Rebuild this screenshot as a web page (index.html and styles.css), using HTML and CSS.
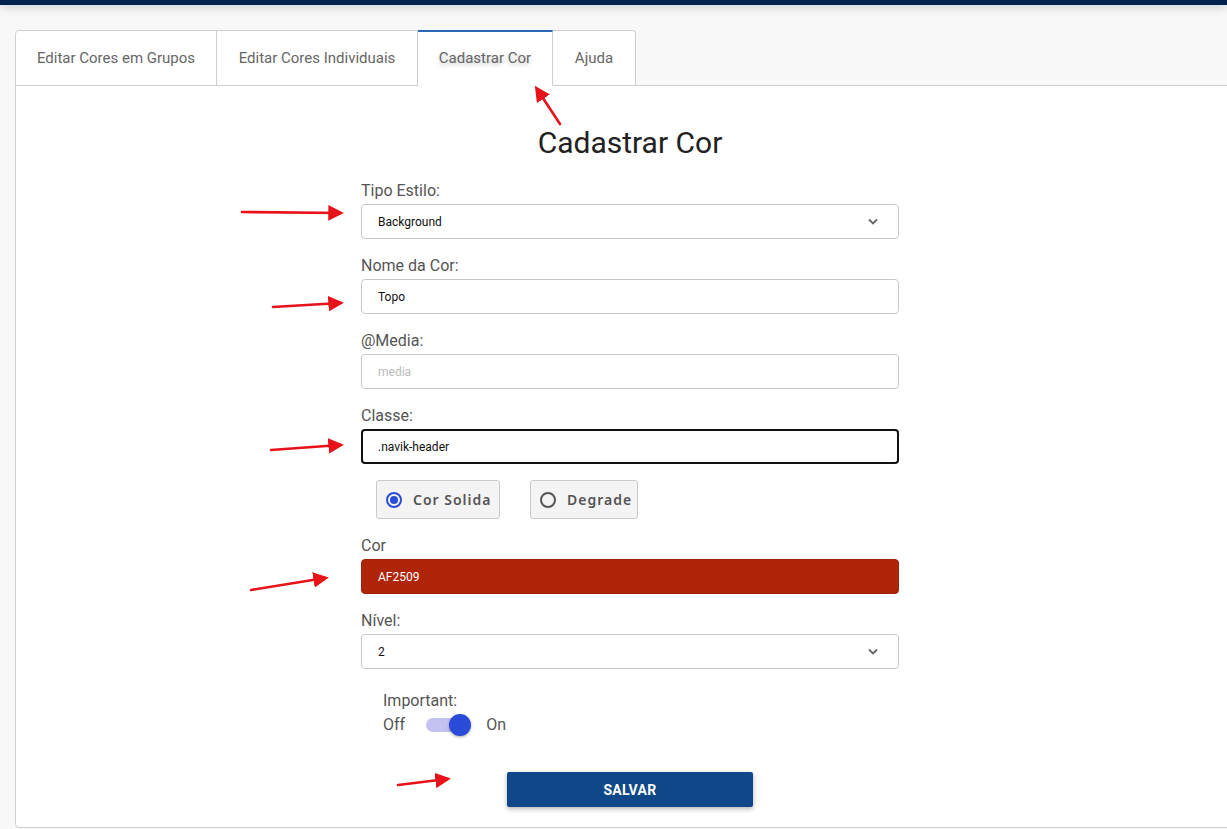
FILE: index.html
```html
<!DOCTYPE html>
<html lang="pt-BR">
<head>
  <meta http-equiv="Content-Type" content="text/html;charset=UTF-8">
  <meta name="viewport" content="width=device-width, initial-scale=1.0">
  <link rel="stylesheet" href="styles.css">
</head>
<body>
  <div class="topbar"></div>

  <div class="page">
    <div class="tabs">
      <div class="tab first">Editar Cores em Grupos</div>
      <div class="tab">Editar Cores Individuais</div>
      <div class="tab active">Cadastrar Cor</div>
      <div class="tab last">Ajuda</div>
      <div class="tab-fill"></div>
    </div>

    <div class="panel">
      <h1 class="form-title">Cadastrar Cor</h1>

      <form class="color-form">
        <div class="field">
          <label class="field-label">Tipo Estilo:</label>
          <div class="input select">
            <span>Background</span>
            <svg class="chevron" width="10" height="7" viewBox="0 0 10 7"><path d="M1 1.5 L5 5.5 L9 1.5" fill="none" stroke="#666" stroke-width="1.8"/></svg>
          </div>
        </div>

        <div class="field">
          <label class="field-label">Nome da Cor:</label>
          <div class="input">Topo</div>
        </div>

        <div class="field">
          <label class="field-label">@Media:</label>
          <div class="input placeholder">media</div>
        </div>

        <div class="field">
          <label class="field-label">Classe:</label>
          <div class="input focused">.navik-header</div>
        </div>

        <div class="radio-row">
          <div class="radio-box">
            <span class="radio checked"></span>
            <span class="radio-text">Cor Solida</span>
          </div>
          <div class="radio-box">
            <span class="radio"></span>
            <span class="radio-text">Degrade</span>
          </div>
        </div>

        <div class="field">
          <label class="field-label">Cor</label>
          <div class="input color-swatch">AF2509</div>
        </div>

        <div class="field">
          <label class="field-label">Nível:</label>
          <div class="input select">
            <span>2</span>
            <svg class="chevron" width="10" height="7" viewBox="0 0 10 7"><path d="M1 1.5 L5 5.5 L9 1.5" fill="none" stroke="#666" stroke-width="1.8"/></svg>
          </div>
        </div>

        <div class="important">
          <div class="field-label">Important:</div>
          <div class="toggle-row">
            <span>Off</span>
            <span class="switch"><span class="thumb"></span></span>
            <span>On</span>
          </div>
        </div>

        <div class="actions">
          <button type="button" class="save-btn">SALVAR</button>
        </div>
      </form>
    </div>
  </div>

  <svg class="annotations" width="1227" height="829" viewBox="0 0 1227 829">
    <defs>
      <marker id="head" markerWidth="6" markerHeight="6" refX="4.5" refY="3" orient="auto" markerUnits="strokeWidth">
        <path d="M0 0 L6 3 L0 6 Z" fill="#e8121a"/>
      </marker>
    </defs>
    <g stroke="#e8121a" stroke-width="2.6" stroke-linecap="round" fill="none" marker-end="url(#head)">
      <line x1="560" y1="124" x2="537" y2="89"/>
      <line x1="242" y1="212" x2="340" y2="213"/>
      <line x1="273" y1="307" x2="340" y2="303"/>
      <line x1="271" y1="450" x2="340" y2="445"/>
      <line x1="251" y1="590" x2="325" y2="578"/>
      <line x1="398" y1="785" x2="447" y2="779"/>
    </g>
  </svg>
</body>
</html>
```

FILE: styles.css
```css
* {
  margin: 0;
  padding: 0;
  box-sizing: border-box;
  font-family: Roboto, 'Liberation Sans', sans-serif;
}

html, body {
  width: 1227px;
  height: 829px;
  overflow: hidden;
  background: #f8f8f8;
}

body {
  position: relative;
}

.topbar {
  height: 5px;
  background: #01224d;
  box-shadow: 0 2px 8px rgba(1, 34, 77, 0.25);
}

.page {
  padding: 25px 0 0 15px;
  margin-right: -18px;
}

.tabs {
  display: flex;
  height: 55px;
}

.tab {
  display: flex;
  align-items: center;
  justify-content: center;
  white-space: nowrap;
  flex-shrink: 0;
  font-size: 15px;
  color: #666;
  background: #fff;
  border: 1px solid #cfcfcf;
  border-left: none;
  margin-bottom: -1px;
  position: relative;
  z-index: 1;
}

.tab.first {
  border-left: 1px solid #cfcfcf;
  border-top-left-radius: 4px;
  width: 202px;
}

.tab:nth-child(2) {
  width: 201px;
}

.tab.active {
  width: 135px;
  padding-bottom: 2px;
  border-top: 2px solid #2b67b3;
  border-bottom-color: #fff;
  text-shadow: 0 2px 4px rgba(0, 0, 0, 0.25);
}

.tab.last {
  width: 83px;
  border-top-right-radius: 4px;
}

.tab-fill {
  flex: 1;
}

.panel {
  background: #fff;
  border: 1px solid #cfcfcf;
  border-bottom-left-radius: 4px;
  padding: 39px 0 20px;
}

.form-title {
  font-size: 30px;
  font-weight: 400;
  line-height: 36px;
  color: #222;
  text-align: center;
  margin-bottom: 20px;
}

.color-form {
  width: 538px;
  margin: 0 auto;
}

.field {
  margin-bottom: 17px;
}

.field-label {
  display: block;
  font-size: 16px;
  line-height: 19px;
  color: #555;
  margin-bottom: 4px;
}

.input {
  height: 35px;
  border: 1px solid #c8c8c8;
  border-radius: 4px;
  padding: 0 16px;
  display: flex;
  align-items: center;
  justify-content: space-between;
  font-size: 12px;
  color: #111;
  background: #fff;
}

.input.placeholder {
  color: #bbb;
}

.input.focused {
  border: 2px solid #111;
  padding-left: 15px;
}

.input.color-swatch {
  background: #af2509;
  border-color: #a02208;
  color: #fff;
}

.chevron {
  margin-right: 4px;
}

.radio-row {
  display: flex;
  gap: 30px;
  padding-left: 15px;
  margin: -1px 0 17px;
}

.radio-box {
  height: 39px;
  display: flex;
  align-items: center;
  gap: 11px;
  padding-left: 9px;
  white-space: nowrap;
  background: #f4f4f4;
  border: 1px solid #cacaca;
  border-radius: 3px;
}

.radio-box:first-child {
  width: 124px;
}

.radio-box:last-child {
  width: 108px;
}

.radio {
  flex-shrink: 0;
  width: 16px;
  height: 16px;
  border: 2px solid #555;
  border-radius: 50%;
  position: relative;
}

.radio.checked {
  border-color: #2a4bd7;
}

.radio.checked::after {
  content: '';
  position: absolute;
  inset: 2px;
  border-radius: 50%;
  background: #2a4bd7;
}

.radio-text {
  font-family: 'Noto Sans', sans-serif;
  font-size: 14px;
  font-weight: 600;
  letter-spacing: 1px;
  color: #555;
}

.important {
  padding-left: 22px;
  margin-top: 22px;
}

.important .field-label {
  margin-bottom: 5px;
}

.toggle-row {
  display: flex;
  align-items: center;
  font-size: 16px;
  color: #555;
}

.switch {
  width: 44px;
  height: 14px;
  border-radius: 7px;
  background: #c4c2f3;
  position: relative;
  margin: 0 16px 0 21px;
}

.thumb {
  position: absolute;
  right: -1px;
  top: -4px;
  width: 22px;
  height: 22px;
  border-radius: 50%;
  background: #2a4bd7;
  box-shadow: 0 1px 3px rgba(0, 0, 0, 0.35);
}

.actions {
  display: flex;
  justify-content: center;
  margin-top: 38px;
}

.save-btn {
  width: 246px;
  height: 35px;
  border: none;
  border-radius: 2px;
  background: #0f4788;
  color: #fff;
  font-size: 14px;
  font-weight: 700;
  letter-spacing: 0.3px;
  box-shadow: 0 2px 5px rgba(0, 0, 0, 0.3);
}

.annotations {
  position: absolute;
  left: 0;
  top: 0;
  pointer-events: none;
}
```
